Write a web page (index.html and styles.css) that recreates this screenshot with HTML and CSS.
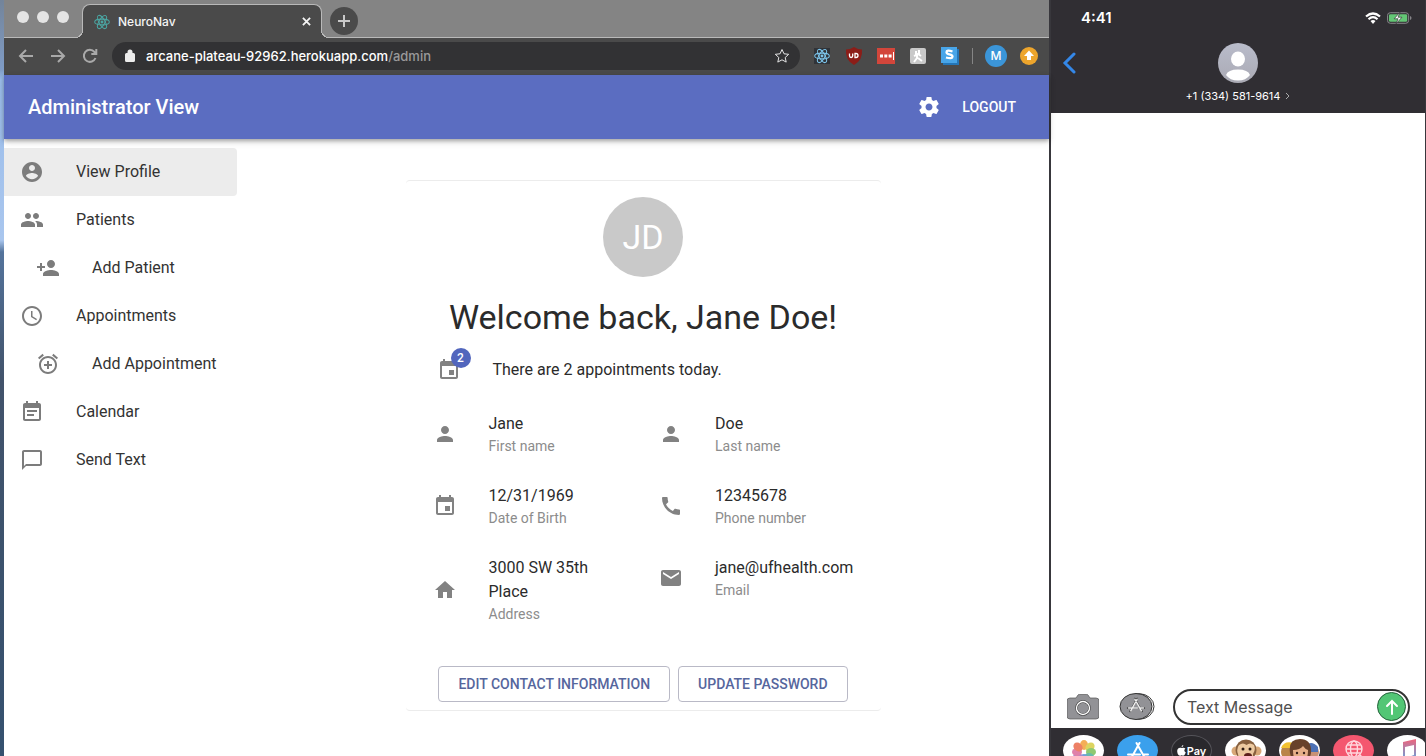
FILE: index.html
```html
<!DOCTYPE html>
<html lang="en">
<head>
<meta charset="utf-8">
<meta name="viewport" content="width=device-width, initial-scale=1">
<title>NeuroNav</title>
<link rel="stylesheet" href="styles.css">
</head>
<body>
<svg class="sprite" aria-hidden="true">
  <symbol id="person" viewBox="0 0 24 24"><path d="M12 12c2.21 0 4-1.79 4-4s-1.790-4-4-4-4 1.790-4 4 1.790 4 4 4zm0 2c-2.670 0-8 1.340-8 4v2h16v-2c0-2.660-5.330-4-8-4z"/></symbol>
  <symbol id="event" viewBox="0 0 24 24"><path d="M17 12h-5v5h5v-5zM16 1v2H8V1H6v2H5c-1.110 0-1.990.9-1.990 2L3 19c0 1.100.89 2 2 2h14c1.100 0 2-.9 2-2V5c0-1.100-.9-2-2-2h-1V1h-2zm3 18H5V8h14v11z"/></symbol>
  <symbol id="atom" viewBox="0 0 24 24"><g fill="none" stroke="currentColor" stroke-width="1.6"><ellipse cx="12" cy="12" rx="11" ry="4.300"/><ellipse cx="12" cy="12" rx="11" ry="4.300" transform="rotate(60 12 12)"/><ellipse cx="12" cy="12" rx="11" ry="4.300" transform="rotate(120 12 12)"/></g><circle cx="12" cy="12" r="2.200"/></symbol>
  <symbol id="appstore" viewBox="0 0 24 24"><path d="M13.500 3L5 18.500M10.500 3l8.700 15.500M2 14.500h12M17.500 14.500H22" fill="none" stroke="currentColor" stroke-width="2" stroke-linecap="round"/></symbol>
</svg>
<div class="desktop">
  <section class="browser" aria-label="Browser">
    <div class="tabstrip">
      <div class="lights"><i></i><i></i><i></i></div>
      <div class="tab">
        <svg class="tab-logo"><use href="#atom"/></svg>
        <span class="tab-title">NeuroNav</span>
        <button class="plain" aria-label="Close tab"><svg class="close" viewBox="0 0 10 10"><path d="M1 1l8 8M9 1L1 9"/></svg></button>
      </div>
      <button class="new-tab" aria-label="New tab"><svg viewBox="0 0 14 14"><path d="M7 1v12M1 7h12"/></svg></button>
    </div>
    <div class="toolbar">
      <div class="history">
        <button class="plain" aria-label="Back"><svg viewBox="0 0 16 16"><path d="M15 8H2M8 2L2 8l6 6"/></svg></button>
        <button class="plain" aria-label="Forward"><svg viewBox="0 0 16 16"><path d="M1 8h13M8 2l6 6-6 6"/></svg></button>
        <button class="plain" aria-label="Reload"><svg viewBox="0 0 16 16"><path d="M13.500 10A6 6 0 1 1 12.500 4L14 5.500M14.300 1v5h-5"/></svg></button>
      </div>
      <div class="omnibox">
        <svg class="lock" viewBox="0 0 10 13"><path d="M1.500 4H2.500V3a2.500 2.500 0 0 1 5 0v1h1Q10 4 10 5.500v6Q10 13 8.500 13h-7Q0 13 0 11.500v-6Q0 4 1.500 4z"/></svg>
        <div class="url" role="textbox" aria-label="Address"><span class="host">arcane-plateau-92962.herokuapp.com</span>/admin</div>
        <button class="plain" aria-label="Bookmark"><svg class="star" viewBox="0 0 16 16"><path d="M8 1.500l2 4.300 4.700.5-3.500 3.200 1 4.600L8 11.800l-4.200 2.300 1-4.600L1.300 6.300 6 5.800z"/></svg></button>
      </div>
      <div class="extensions">
        <svg class="ext atom-ext" viewBox="0 0 20 20"><path fill="#303338" d="M2 2h16v16H2z"/><use href="#atom" x="2" y="2" width="16" height="16"/></svg>
        <svg class="ext" viewBox="0 0 20 20"><path fill="#8c1d18" d="M10 1q4 2.500 8 2.500Q19 14 10 19 1 14 2 3.500 6 3.500 10 1z"/><path d="M5.500 7.500v2.300q0 1.700 1.600 1.700t1.600-1.700V7.500M11 7.500v4h1q2 0 2-2t-2-2z" fill="none" stroke="#fff" stroke-width="1.300"/></svg>
        <svg class="ext" viewBox="0 0 20 20"><path fill="#d3463b" d="M1 2h18v16H1z"/><path fill="#fff" d="M4 8.500h3v3H4zM8.300 8.500h3v3h-3zM12.600 8.500h3v3h-3zM17 6h1v8h-1z"/></svg>
        <svg class="ext" viewBox="0 0 20 20"><rect x="2" y="2" width="16" height="16" rx="2" fill="#c9c9c9"/><path d="M8 5v5M11 4v4M6 10l4-2 3 2M9 9v3l-3 4M10 12l4 3" fill="none" stroke="#fff" stroke-width="2"/></svg>
        <svg class="ext" viewBox="0 0 20 20"><path fill="#2476b8" d="M3 3h16v16H3z"/><path fill="#48a5e8" d="M1 1h16v16H1z"/><path d="M12.500 5.500q-6-2-6 .7C6.500 9 12.500 7.500 12.500 10.500q0 2.800-6.500 1" fill="none" stroke="#fff" stroke-width="2.300"/></svg>
        <span class="divider"></span>
        <button class="profile" aria-label="Profile">M</button>
        <svg class="update" viewBox="0 0 20 20"><circle cx="10" cy="10" r="9" fill="#eda52c"/><path d="M10 4.500l5 5.500h-3v4H8v-4H5z" fill="#fff"/></svg>
      </div>
    </div>

    <div class="app">
      <header class="appbar">
        <div class="appbar-title">Administrator View</div>
        <button class="plain" aria-label="Settings"><svg class="icon" viewBox="0 0 24 24"><path d="M19.430 12.980c.04-.32.070-.64.070-.98s-.03-.66-.07-.98l2.110-1.650c.19-.15.24-.42.120-.64l-2-3.460c-.12-.22-.39-.3-.61-.22l-2.490 1c-.52-.4-1.080-.73-1.690-.98l-.38-2.650C14.460 2.180 14.250 2 14 2h-4c-.25 0-.46.180-.49.420l-.38 2.650c-.61.250-1.170.590-1.690.980l-2.490-1c-.23-.09-.49 0-.61.220l-2 3.460c-.13.220-.07.490.120.640l2.110 1.650c-.04.320-.07.650-.07.980s.030.660.070.980l-2.110 1.650c-.19.150-.24.420-.12.640l2 3.460c.120.220.390.300.610.220l2.490-1c.52.400 1.080.730 1.690.980l.38 2.650c.030.240.240.420.490.420h4c.250 0 .46-.18.490-.42l.38-2.650c.61-.25 1.170-.59 1.690-.98l2.490 1c.23.090.490 0 .61-.22l2-3.460c.12-.22.070-.49-.12-.64l-2.110-1.650zM12 15.500c-1.930 0-3.500-1.570-3.500-3.500s1.570-3.500 3.500-3.500 3.500 1.570 3.500 3.500-1.570 3.500-3.500 3.500z"/></svg></button>
        <button class="plain logout">LOGOUT</button>
      </header>
      <div class="app-body">
        <nav class="sidebar">
          <a class="nav-item selected" href="#profile"><svg class="icon" viewBox="0 0 24 24"><path d="M12 2C6.480 2 2 6.480 2 12s4.480 10 10 10 10-4.480 10-10S17.520 2 12 2zm0 3c1.660 0 3 1.340 3 3s-1.340 3-3 3-3-1.340-3-3 1.340-3 3-3zm0 14.200c-2.500 0-4.710-1.280-6-3.220.030-1.990 4-3.080 6-3.080 1.990 0 5.970 1.090 6 3.080-1.290 1.940-3.500 3.220-6 3.220z"/></svg>View Profile</a>
          <a class="nav-item" href="#patients"><svg class="icon" viewBox="0 0 24 24"><path d="M16 11c1.660 0 2.990-1.340 2.990-3S17.660 5 16 5s-3 1.340-3 3 1.340 3 3 3zm-8 0c1.660 0 2.990-1.340 2.990-3S9.660 5 8 5 5 6.340 5 8s1.340 3 3 3zm0 2c-2.330 0-7 1.170-7 3.500V19h14v-2.500c0-2.330-4.670-3.500-7-3.500zm8 0c-.29 0-.62.020-.97.050 1.160.840 1.970 1.970 1.970 3.450V19h6v-2.500c0-2.330-4.670-3.500-7-3.500z"/></svg>Patients</a>
          <a class="nav-item nested" href="#add-patient"><svg class="icon" viewBox="0 0 24 24"><path d="M15 12c2.210 0 4-1.790 4-4s-1.790-4-4-4-4 1.790-4 4 1.790 4 4 4zm-9-2V7H4v3H1v2h3v3h2v-3h3v-2H6zm9 4c-2.670 0-8 1.340-8 4v2h16v-2c0-2.660-5.330-4-8-4z"/></svg>Add Patient</a>
          <a class="nav-item" href="#appointments"><svg class="icon" viewBox="0 0 24 24"><path d="M11.990 2C6.470 2 2 6.480 2 12s4.470 10 9.990 10C17.520 22 22 17.520 22 12S17.520 2 11.990 2zM12 20c-4.420 0-8-3.580-8-8s3.580-8 8-8 8 3.580 8 8-3.580 8-8 8zM12.500 7H11v6l5.250 3.150.75-1.230-4.500-2.670z"/></svg>Appointments</a>
          <a class="nav-item nested" href="#add-appointment"><svg class="icon" viewBox="0 0 24 24"><path d="M7.880 3.390L6.600 1.860 2 5.710l1.290 1.530 4.590-3.850zM22 5.720l-4.600-3.860-1.290 1.530 4.600 3.860L22 5.720zM12 4c-4.970 0-9 4.030-9 9s4.020 9 9 9c4.970 0 9-4.030 9-9s-4.030-9-9-9zm0 16c-3.870 0-7-3.130-7-7s3.130-7 7-7 7 3.130 7 7-3.130 7-7 7zm1-11h-2v3H8v2h3v3h2v-3h3v-2h-3V9z"/></svg>Add Appointment</a>
          <a class="nav-item" href="#calendar"><svg class="icon" viewBox="0 0 24 24"><path d="M17 10H7v2h10v-2zm2-7h-1V1h-2v2H8V1H6v2H5c-1.110 0-1.990.9-1.990 2L3 19c0 1.100.89 2 2 2h14c1.100 0 2-.9 2-2V5c0-1.100-.9-2-2-2zm0 16H5V8h14v11zm-5-5H7v2h7v-2z"/></svg>Calendar</a>
          <a class="nav-item" href="#send-text"><svg class="icon" viewBox="0 0 24 24"><path d="M20 2H4c-1.100 0-2 .9-2 2v18l4-4h14c1.100 0 2-.9 2-2V4c0-1.100-.9-2-2-2zm0 14H6l-2 2V4h16v12z"/></svg>Send Text</a>
        </nav>
        <main class="content">
          <section class="card">
            <div class="avatar">JD</div>
            <h1>Welcome back, Jane Doe!</h1>
            <div class="today">
              <span class="badge-anchor"><svg class="icon"><use href="#event"/></svg><span class="badge">2</span></span>
              <span>There are 2 appointments today.</span>
            </div>
            <dl class="details">
              <div class="detail"><svg class="icon"><use href="#person"/></svg><div><dd>Jane</dd><dt>First name</dt></div></div>
              <div class="detail"><svg class="icon"><use href="#person"/></svg><div><dd>Doe</dd><dt>Last name</dt></div></div>
              <div class="detail"><svg class="icon"><use href="#event"/></svg><div><dd>12/31/1969</dd><dt>Date of Birth</dt></div></div>
              <div class="detail"><svg class="icon" viewBox="0 0 24 24"><path d="M20.010 15.380c-1.230 0-2.420-.2-3.530-.56-.35-.12-.74-.03-1.010.240l-1.570 1.970c-2.830-1.350-5.480-3.900-6.890-6.830l1.950-1.660c.27-.28.350-.67.240-1.020-.37-1.110-.56-2.300-.56-3.530 0-.54-.45-.99-.99-.99H4.190C3.650 3 3 3.240 3 3.990 3 13.280 10.730 21 20.010 21c.71 0 .99-.63.990-1.180v-3.450c0-.54-.45-.99-.99-.99z"/></svg><div><dd>12345678</dd><dt>Phone number</dt></div></div>
              <div class="detail"><svg class="icon" viewBox="0 0 24 24"><path d="M10 20v-6h4v6h5v-8h3L12 3 2 12h3v8z"/></svg><div><dd>3000 SW 35th Place</dd><dt>Address</dt></div></div>
              <div class="detail"><svg class="icon" viewBox="0 0 24 24"><path d="M20 4H4c-1.100 0-1.990.9-1.990 2L2 18c0 1.100.9 2 2 2h16c1.100 0 2-.9 2-2V6c0-1.100-.9-2-2-2zm0 4l-8 5-8-5V6l8 5 8-5v2z"/></svg><div><dd>jane@ufhealth.com</dd><dt>Email</dt></div></div>
            </dl>
            <div class="actions">
              <button class="outlined">EDIT CONTACT INFORMATION</button>
              <button class="outlined">UPDATE PASSWORD</button>
            </div>
          </section>
        </main>
      </div>
    </div>
  </section>

  <section class="phone" aria-label="Messages">
    <header class="phone-head">
      <div class="status">
        <time>4:41</time>
        <div class="status-icons">
          <svg class="wifi" viewBox="0 0 16 12"><g fill="none" stroke="#fff" stroke-width="2.200"><path d="M1 4.500q7-6 14 0M3.500 7.200q4.500-4 9 0"/></g><path d="M5.500 9q2.500-2 5 0L8 12z" fill="#fff"/></svg>
          <svg class="battery" viewBox="0 0 26 12"><rect x=".5" y=".5" width="22" height="11" rx="3" fill="none" stroke="#8b8b8f"/><rect x="2" y="2" width="19" height="8" rx="1.500" fill="#63c675"/><path d="M24 4v4q1.500-.5 1.500-2T24 4z" fill="#8b8b8f"/><path d="M13.500 0L7.500 6.800h4L9.500 12l6-6.800h-4z" fill="#fff" stroke="#2f2e33" stroke-width=".7"/></svg>
        </div>
      </div>
      <div class="contact-row">
        <button class="plain" aria-label="Back"><svg class="back" viewBox="0 0 14 22"><path d="M12 2L3 11l9 9"/></svg></button>
        <svg class="contact-photo" viewBox="0 0 40 40"><defs><linearGradient id="ph" x2="0" y2="1"><stop stop-color="#b9bccb"/><stop offset="1" stop-color="#aaaab4"/></linearGradient></defs><circle cx="20" cy="20" r="20" fill="url(#ph)"/><ellipse cx="20" cy="16" rx="7" ry="7.500" fill="#fff"/><path d="M8 32q2-5.500 12-5.500T32 32q-4 5.500-12 5.500T8 32z" fill="#fff"/></svg>
      </div>
      <div class="number">+1 (334) 581-9614 <svg viewBox="0 0 5 8"><path d="M1 1l3 3-3 3"/></svg></div>
    </header>
    <div class="thread"></div>
    <form class="compose">
      <button type="button" class="plain" aria-label="Camera"><svg class="camera" viewBox="0 0 32 26"><path fill="#929296" stroke="#555" stroke-width=".7" d="M3 4h6l2-3q.5-.7 1.500-.7h7q1 0 1.500.7l2 3h6q3 0 3 3v15q0 3-3 3H3q-3 0-3-3V7q0-3 3-3z"/><circle cx="16" cy="14" r="6.500" fill="#929296" stroke="#333" stroke-width="2.400"/><circle cx="16" cy="14" r="6.500" fill="none" stroke="#fff" stroke-width="1.400"/></svg></button>
      <button type="button" class="plain" aria-label="Apps"><svg class="apps" viewBox="0 0 36 27"><ellipse cx="20" cy="13.500" rx="15" ry="12.800" fill="#fff" stroke="#333"/><ellipse cx="17" cy="13.500" rx="16" ry="13" fill="#929296" stroke="#333"/><g color="#333"><use href="#appstore" x="7" y="3" width="20" height="20"/></g><g color="#eee"><use href="#appstore" x="8" y="4" width="18" height="18"/></g></svg></button>
      <div class="message">
        <input type="text" placeholder="Text Message" aria-label="Text Message">
        <button type="button" class="send" aria-label="Send"><svg viewBox="0 0 14 16"><path d="M7 15V2M2 7l5-5 5 5"/></svg></button>
      </div>
    </form>
    <div class="dock">
      <span class="dock-app"><svg viewBox="0 0 40 30"><g opacity=".85"><ellipse cx="20" cy="9" rx="4" ry="5" fill="#f2a03a"/><ellipse cx="26" cy="11" rx="5" ry="4" transform="rotate(-40 26 11)" fill="#d6cd45"/><ellipse cx="27" cy="16" rx="5" ry="4" fill="#7cc05a"/><ellipse cx="25" cy="21" rx="5" ry="4" fill="#4cae9f"/><ellipse cx="20" cy="23" rx="4" ry="5" fill="#5a8ed8"/><ellipse cx="14" cy="21" rx="5" ry="4" fill="#9b78c8"/><ellipse cx="13" cy="16" rx="5" ry="4" fill="#db6a9a"/><ellipse cx="14" cy="11" rx="5" ry="4" transform="rotate(40 14 11)" fill="#ea6a4a"/></g></svg></span>
      <span class="dock-app blue"><svg viewBox="0 0 40 30"><use href="#appstore" x="8" y="4" width="24" height="24"/></svg></span>
      <span class="dock-app pay"><svg viewBox="0 0 9 11"><path d="M6.300 0Q6.400 1.800 4.500 2.300 4.500.5 6.300 0zM4.600 3.100Q7 2 8.400 3.700 6 5.500 8.800 7.500 7.500 11 6 10.700 4.700 10 3.400 10.700C1.500 11.300.1 8 .2 5.800.4 3.200 2.600 2.100 4.600 3.100z"/></svg>Pay</span>
      <span class="dock-app"><svg viewBox="0 0 40 30"><circle cx="10" cy="15" r="4.500" fill="#d8a878"/><circle cx="31" cy="15" r="4.500" fill="#d8a878"/><circle cx="20" cy="14" r="10.500" fill="#87603f"/><path d="M13 9q4-3 7.500 0Q24 6 28 9q2 5-1 9 0 8-7 8t-8-8q-2-5 1-9z" fill="#ecc9a0"/><circle cx="17" cy="13" r="1.500" fill="#2d1b12"/><circle cx="24" cy="13" r="1.500" fill="#2d1b12"/><ellipse cx="22" cy="20" rx="4" ry="3" fill="#5b1f1c"/></svg></span>
      <span class="dock-app"><svg viewBox="0 0 40 30"><circle cx="9" cy="16" r="8" fill="#b98548"/><path d="M1 12q3-8 13-5l-1 5z" fill="#f2c12e"/><circle cx="32" cy="16" r="7" fill="#c89175"/><path d="M26 9q6-5 12 2v5H26z" fill="#4d71b5"/><path d="M10 17Q8 3 20 3t11 14l-2 8H12z" fill="#68412b"/><path d="M13 14q7 0 10-4 2 3 5 4 0 13-7.500 13T13 14z" fill="#e6af88"/><circle cx="17" cy="17" r="1.200" fill="#3a211a"/><circle cx="24" cy="17" r="1.200" fill="#3a211a"/><path d="M17.500 21h6q-3 4-6 0z" fill="#fff"/></svg></span>
      <span class="dock-app red"><svg viewBox="0 0 40 30"><g fill="none" stroke="#ffd7de" stroke-width="1.400"><circle cx="20" cy="13" r="8"/><ellipse cx="20" cy="13" rx="3.500" ry="8"/><path d="M12 13h16M13.500 9h13M13.500 17h13M26 19l5 5"/></g></svg></span>
      <span class="dock-app"><svg viewBox="0 0 40 30"><defs><linearGradient id="mu" x2="0" y2="1"><stop stop-color="#f0647c"/><stop offset="1" stop-color="#55a8e8"/></linearGradient></defs><path d="M15 6l13-3v18q0 3-3 3t-3-2 4-3V9l-9 2v12q0 3-3 3t-3-2 4-3z" fill="url(#mu)"/></svg></span>
    </div>
  </section>
</div>
</body>
</html>
```
FILE: styles.css
```css
* { box-sizing: border-box; }
body { margin: 0; font-family: Roboto, "Liberation Sans", sans-serif; color: #2b2b2b; background: #fff; }
svg { display: block; fill: currentColor; flex: none; }
.sprite { position: absolute; width: 0; height: 0; }
.icon { width: 24px; height: 24px; }
.plain { display: block; flex: none; border: 0; padding: 0; background: none; color: inherit; font: inherit; }

.desktop {
  display: grid;
  grid-template-columns: minmax(0, 1fr) 377px;
  height: 100vh;
  padding-left: 4px;
  overflow: hidden;
  background: linear-gradient(#73849a 0, #7f9cc6 70px, #9bbdea 80px, #a9c6ee 240px, #54749c 252px, #42536b 50%, #35516f 100%);
}

/* Browser window */
.browser { display: flex; flex-direction: column; min-width: 0; background: #fff; }
.tabstrip { display: flex; height: 38px; background: #848484; border-bottom: 1px solid #b9b9b9; }
.lights { display: flex; gap: 8px; padding: 11px 13px 0 13px; }
.lights i { width: 12px; height: 12px; border-radius: 50%; background: #e4e4e4; }
.tab {
  position: relative;
  display: flex;
  align-items: center;
  gap: 8px;
  width: 240px;
  height: 34px;
  margin-top: 4px;
  padding: 0 10px 0 11px;
  border: 1px solid #b9b9b9;
  border-bottom: 0;
  border-radius: 8px 8px 0 0;
  background: #4a4a4a;
  color: #f4f4f4;
}
.tab::before, .tab::after {
  content: "";
  position: absolute;
  bottom: 0;
  width: 8px;
  height: 8px;
}
.tab::before { left: -8px; background: radial-gradient(circle at 0 0, #848484 7px, #b9b9b9 7px 8px, #4a4a4a 8px); }
.tab::after { right: -8px; background: radial-gradient(circle at 100% 0, #848484 7px, #b9b9b9 7px 8px, #4a4a4a 8px); }
.tab-logo { width: 16px; height: 16px; color: #4ba5a2; }
.tab-title { flex: 1; font: 500 12px/16px Inter, sans-serif; }
.close { width: 9px; height: 9px; fill: none; stroke: #f4f4f4; stroke-width: 2; }
.new-tab { display: grid; place-items: center; width: 28px; height: 28px; margin: 7px 0 0 8px; padding: 0; border: 0; border-radius: 50%; background: #4a4a4a; }
.new-tab svg { width: 14px; height: 14px; stroke: #c8c8c8; stroke-width: 2; }
.toolbar { display: flex; align-items: center; height: 37px; padding: 0 10px 2px 14px; background: #4a4a4a; }
.history { display: flex; gap: 16px; padding-right: 14px; color: #b0b0b0; }
.history svg { width: 16px; height: 16px; fill: none; stroke: #a9a9a9; stroke-width: 2; }
.omnibox { display: flex; align-items: center; flex: 1; min-width: 0; height: 28px; padding: 0 10px 0 13px; border-radius: 14px; background: #323234; }
.lock { width: 10px; height: 13px; color: #ececec; }
.url { flex: 1; min-width: 0; margin-left: 11px; overflow: hidden; white-space: nowrap; color: #9a9a9a; font: 500 13px/20px Inter, sans-serif; }
.host { color: #fff; }
.star { width: 16px; height: 16px; fill: none; stroke: #e5e5e5; stroke-width: 1; }
.extensions { display: flex; align-items: center; gap: 12px; padding-left: 12px; }
.ext { width: 20px; height: 20px; }
.atom-ext { color: #7cc4ea; }
.divider { width: 1px; height: 16px; background: #858585; }
.profile { width: 22px; height: 22px; padding: 0; border: 0; border-radius: 50%; background: #3b95d8; color: #fff; font: 500 12px/22px Inter, sans-serif; }
.update { width: 20px; height: 20px; }

/* Application */
.app { display: flex; flex-direction: column; flex: 1; min-height: 0; }
.appbar { position: relative; display: flex; align-items: center; gap: 21px; height: 64px; flex: none; padding: 0 33px 0 24px; background: #5b6dc1; color: #fff; box-shadow: 0 2px 4px rgba(0, 0, 0, .3), 0 3px 8px rgba(0, 0, 0, .1); }
.appbar-title { flex: 1; font-size: 20px; line-height: 32px; font-weight: 500; }
.logout { font-size: 14px; line-height: 24px; font-weight: 500; }
.app-body { display: flex; flex: 1; min-height: 0; }
.sidebar { width: 233px; flex: none; padding-top: 9px; }
.nav-item { display: flex; align-items: center; gap: 32px; height: 48px; padding: 0 16px; color: #333; font-size: 16px; line-height: 24px; text-decoration: none; white-space: nowrap; }
.nav-item .icon { color: #7c7c7c; }
.nav-item.nested { padding-left: 32px; }
.selected { border-radius: 0 4px 4px 0; background: #ececec; }
.content { flex: 1; min-width: 0; padding: 41px 16px 0; }
.card { max-width: 475px; margin: 0 auto; padding: 16px 11px 8px; border: 1px solid #ececec; border-width: 1px 0; border-radius: 4px; }
.avatar { width: 80px; height: 80px; margin: 0 auto 20px; border-radius: 50%; background: #c9c9c9; color: #fff; font-size: 34px; line-height: 80px; text-align: center; }
h1 { margin: 0; font-size: 34px; line-height: 40px; font-weight: 400; text-align: center; white-space: nowrap; }
.today { display: flex; align-items: center; gap: 32px; padding: 21px 20px 16px; font-size: 16px; line-height: 24px; }
.today .icon, .detail .icon { color: #828282; }
.badge-anchor { position: relative; }
.badge { position: absolute; top: -10px; right: -10px; width: 20px; height: 20px; border-radius: 50%; background: #5266bd; color: #fff; font-size: 12px; line-height: 20px; font-weight: 500; text-align: center; }
.details { display: grid; grid-template-columns: 1fr 1fr; align-items: start; margin: 0; }
.detail { display: flex; align-items: center; gap: 32px; padding: 14px 16px; }
.detail > div { display: flex; flex-direction: column; min-width: 0; }
dd { margin: 0; font-size: 16px; line-height: 24px; }
dt { color: #8c8c8c; font-size: 14px; line-height: 20px; }
.actions { display: flex; justify-content: center; gap: 8px; margin-top: 28px; }
.outlined { height: 36px; padding: 0 19px; border: 1px solid #b9b9c6; border-radius: 4px; background: #fff; color: #56669d; font: 500 14px/24px Roboto, sans-serif; white-space: nowrap; }

/* Phone */
.phone { display: flex; flex-direction: column; min-width: 0; overflow: hidden; border-left: 2px solid #38373c; border-right: 1px solid #38373c; background: #fff; font-family: Inter, sans-serif; }
.phone-head { flex: none; height: 113px; padding: 9px 11px 0; background: #302e33; color: #fff; }
.status { display: flex; align-items: center; justify-content: space-between; height: 18px; padding: 0 2px 0 19px; font-size: 15px; line-height: 18px; font-weight: 600; }
.status-icons { display: flex; align-items: center; gap: 6px; }
.wifi { width: 16px; height: 12px; }
.battery { width: 25px; height: 12px; }
.contact-row { display: grid; grid-template-columns: 1fr 40px 1fr; align-items: center; margin-top: 16px; }
.back { width: 14px; height: 22px; fill: none; stroke: #3487e8; stroke-width: 3; stroke-linecap: round; }
.contact-photo { width: 40px; height: 40px; }
.number { display: flex; align-items: center; justify-content: center; gap: 5px; margin-top: 5px; font-size: 11px; line-height: 16px; }
.number svg { width: 5px; height: 8px; fill: none; stroke: #aaa; }
.thread { flex: 1; }
.compose { display: flex; align-items: center; gap: 20px; flex: none; height: 43px; margin: 0; padding: 0 15px 0 16px; }
.camera { width: 32px; height: 26px; }
.apps { width: 36px; height: 27px; }
.message { display: flex; align-items: center; flex: 1; min-width: 0; height: 36px; margin-left: -2px; padding: 0 2px 0 12px; border: 2px solid #333; border-radius: 18px; }
.message input { flex: 1; min-width: 0; border: 0; padding: 0; outline: 0; background: none; font: 400 16px/24px Inter, sans-serif; }
.message input::placeholder { color: #4f4f4f; opacity: 1; }
.send { display: grid; place-items: center; flex: none; width: 29px; height: 29px; padding: 0; border: 1px solid #24613a; border-radius: 50%; background: #52c675; }
.send svg { width: 14px; height: 16px; fill: none; stroke: #fff; stroke-width: 2; stroke-linecap: round; }
.dock { display: flex; gap: 13px; flex: none; height: 28px; padding: 7px 0 0 12px; overflow: hidden; background: #302e33; }
.dock-app { display: flex; align-items: center; justify-content: center; flex: none; width: 41px; height: 31px; overflow: hidden; border-radius: 50%; background: #fff; }
.dock-app svg { width: 40px; height: 30px; }
.blue { background: #3ba0ec; color: #fff; }
.red { background: #f4576f; }
.pay { gap: 1px; border: 1px solid #55545a; background: #29282c; color: #fff; font-size: 11px; line-height: 14px; font-weight: 600; }
.dock-app.pay svg { width: 9px; height: 11px; }
```
